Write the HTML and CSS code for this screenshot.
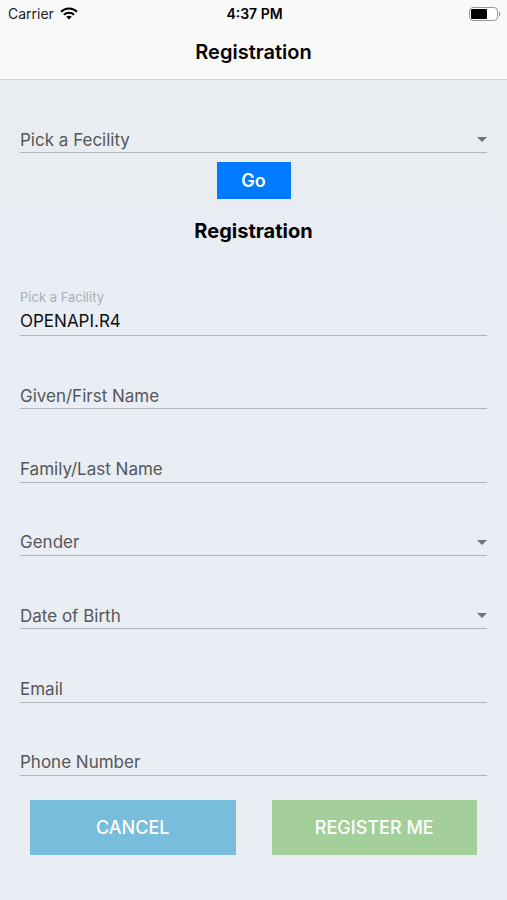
FILE: index.html
```html
<!DOCTYPE html>
<html lang="en">
<head>
  <meta charset="UTF-8">
  <meta name="viewport" content="width=device-width, initial-scale=1">
  <title>Registration</title>
  <link rel="stylesheet" href="styles.css">
</head>
<body>
  <header class="header">
    <div class="status-bar">
      <div class="carrier">
        <span>Carrier</span>
        <svg width="18" height="13" viewBox="0 0 18 13" fill="none" stroke="#000" stroke-width="2" aria-hidden="true">
          <path d="M1 4.8C5.400 0.300 12.600 0.300 17 4.800"/>
          <path d="M3.900 7.800C6.800 5 11.200 5 14.100 7.800"/>
          <path d="M9 12.600L6.200 9.800C7.800 8.300 10.200 8.300 11.800 9.800Z" fill="#000" stroke="none"/>
        </svg>
      </div>
      <div class="time">4:37 PM</div>
      <div class="battery">
        <svg width="32" height="14" viewBox="0 0 32 14" aria-hidden="true">
          <rect x="0.500" y="0.500" width="28" height="13" rx="3.500" fill="#fff" stroke="#999"/>
          <rect x="2" y="2" width="16" height="10" rx="1" fill="#000"/>
          <path d="M30 4.500C31.800 5.200 31.800 8.800 30 9.500Z" fill="#999"/>
        </svg>
      </div>
    </div>
    <h1 class="title">Registration</h1>
  </header>

  <main class="page">
    <form class="facility-form">
      <div class="field">
        <select class="control" aria-label="Pick a Fecility">
          <option>Pick a Fecility</option>
        </select>
      </div>
      <button class="go" type="button">Go</button>
    </form>

    <h2 class="section-title">Registration</h2>

    <form class="register-form">
      <div class="field filled">
        <label class="label" for="facility">Pick a Facility</label>
        <input class="control" id="facility" type="text" value="OPENAPI.R4">
      </div>
      <div class="field">
        <input class="control" type="text" placeholder="Given/First Name" aria-label="Given/First Name">
      </div>
      <div class="field">
        <input class="control" type="text" placeholder="Family/Last Name" aria-label="Family/Last Name">
      </div>
      <div class="field">
        <select class="control" aria-label="Gender">
          <option>Gender</option>
        </select>
      </div>
      <div class="field">
        <select class="control" aria-label="Date of Birth">
          <option>Date of Birth</option>
        </select>
      </div>
      <div class="field">
        <input class="control" type="email" placeholder="Email" aria-label="Email">
      </div>
      <div class="field">
        <input class="control" type="tel" placeholder="Phone Number" aria-label="Phone Number">
      </div>
      <div class="actions">
        <button class="btn cancel" type="button">CANCEL</button>
        <button class="btn register" type="button">REGISTER ME</button>
      </div>
    </form>
  </main>
</body>
</html>
```
FILE: styles.css
```css
* {
  box-sizing: border-box;
}

body {
  margin: 0;
  min-height: 100vh;
  display: flex;
  flex-direction: column;
  font-family: Inter, "Liberation Sans", sans-serif;
  background: linear-gradient(#e9edf0, #e9edf4 300px);
  color: #000;
}

.header {
  height: 80px;
  background-color: #f9f9f9;
  border-bottom: 1px solid #d4d6d8;
}

.status-bar {
  display: grid;
  grid-template-columns: 1fr auto 1fr;
  align-items: center;
  height: 27px;
  padding: 0 6px 0 8px;
  font-size: 14px;
}

.carrier {
  display: flex;
  align-items: center;
  gap: 6px;
  color: #222;
}

.time {
  font-weight: 600;
}

.battery {
  display: flex;
  justify-content: flex-end;
}

.title {
  margin: 0;
  font-size: 20px;
  font-weight: 600;
  line-height: 50px;
  text-align: center;
}

.page {
  flex: 1;
  display: flex;
  flex-direction: column;
  padding: 0 20px;
}

.facility-form {
  display: flex;
  flex-direction: column;
  align-items: center;
}

.field {
  width: 100%;
  min-height: 73px;
  display: flex;
  flex-direction: column;
  justify-content: flex-end;
  border-bottom: 1px solid #b0b3b7;
}

.control {
  appearance: none;
  width: 100%;
  height: 25px;
  padding: 0;
  border: 0;
  border-radius: 0;
  outline: none;
  background: transparent;
  font-family: inherit;
  font-size: 17px;
  color: #555759;
}

.control::placeholder {
  color: #555759;
  opacity: 1;
}

select.control {
  background: url("data:image/svg+xml,%3Csvg xmlns='http://www.w3.org/2000/svg' width='10' height='5'%3E%3Cpath d='M0 0h10L5 5z' fill='%23717375'/%3E%3C/svg%3E") no-repeat right center;
}

.label {
  font-size: 13px;
  line-height: 20px;
  color: #abaeb3;
}

.filled .control {
  height: 28px;
  color: #111;
}

.go {
  width: 74px;
  height: 37px;
  margin-top: 9px;
  padding: 0;
  border: 0;
  background-color: #007aff;
  color: #fff;
  font-family: inherit;
  font-size: 18px;
  font-weight: 600;
}

.section-title {
  margin: 20px 0 0;
  font-size: 20px;
  font-weight: 700;
  line-height: 24px;
  text-align: center;
}

.register-form {
  flex: 1;
  display: flex;
  flex-direction: column;
}

.register-form .field {
  flex: 1;
}

.register-form .filled {
  flex: none;
  height: 93px;
}

.actions {
  display: flex;
  gap: 36px;
  padding: 24px 10px 45px;
}

.btn {
  flex: 1;
  height: 55px;
  padding: 0;
  border: 0;
  color: #fff;
  font-family: inherit;
  font-size: 18px;
  font-weight: 500;
}

.cancel {
  background-color: #78bddb;
}

.register {
  background-color: #a4cf9b;
}
```
